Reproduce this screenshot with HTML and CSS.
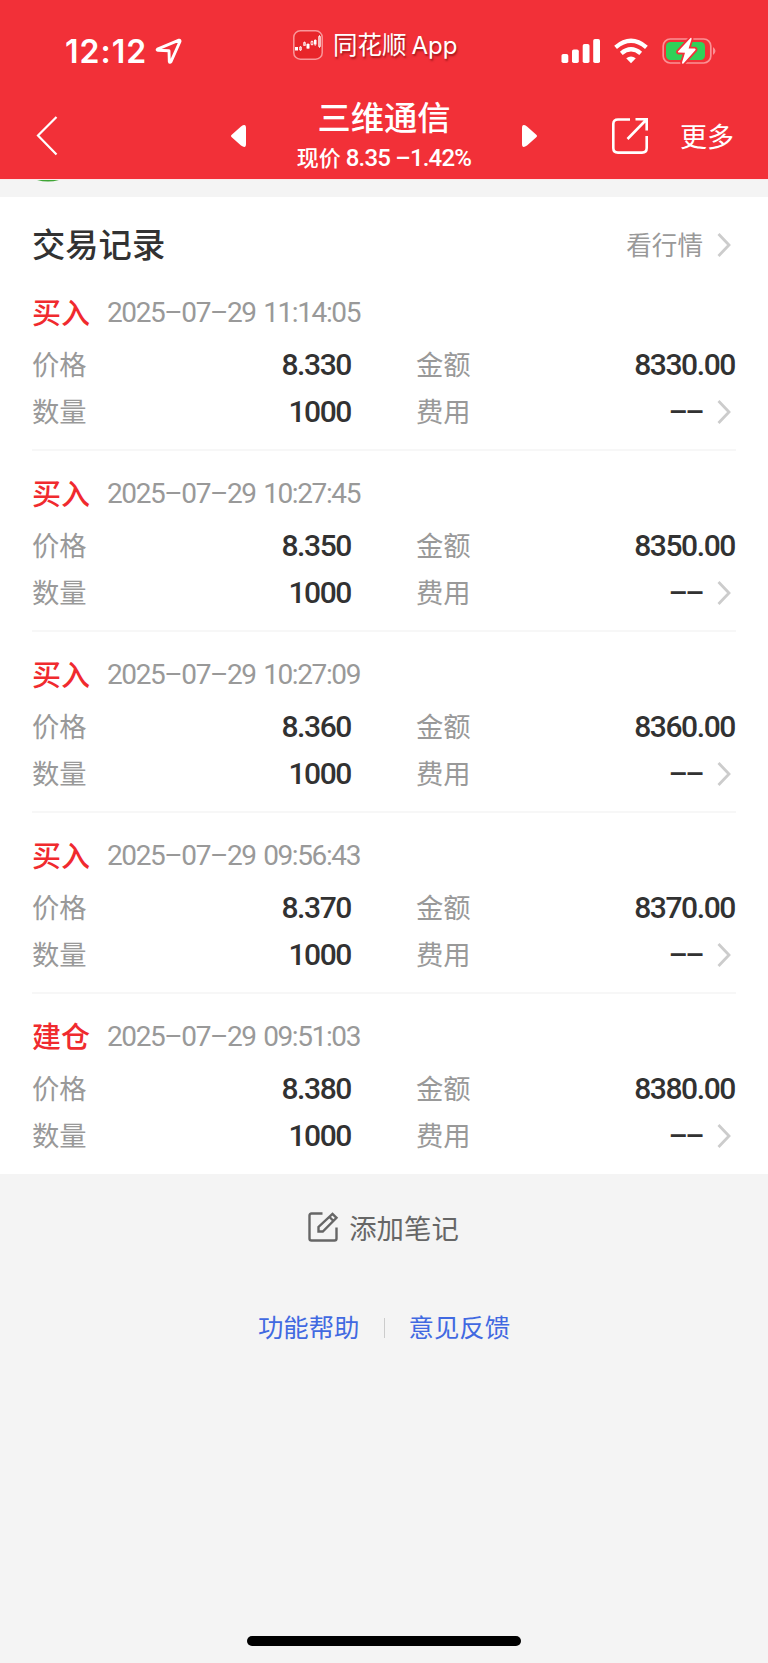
FILE: index.html
```
<!DOCTYPE html>
<html lang="zh-CN">

<head>
  <meta charset="UTF-8">
  <meta name="viewport" content="width=device-width, initial-scale=1.0">
  <title>交易记录</title>
  <link rel="stylesheet" href="styles.css">
</head>

<body>
  <header class="header">
    <div class="status">
      <span class="time">12:12</span>
      <svg class="location" width="27" height="27" viewBox="0 0 27 27">
        <path d="M24 2.2 2.5 11.2Q1.5 12 3 12.3L14 12.8 14.3 23.5Q14.8 25.2 16 23.6L25 3.5Q25.2 1.8 24 2.2Z" fill="none" stroke="#fff" stroke-width="2.9" stroke-linejoin="round"/>
      </svg>
      <svg class="app-icon" width="30" height="30" viewBox="0 0 30 30">
        <rect x=".8" y=".8" width="28.4" height="28.4" rx="6.5" fill="#e8252a" stroke="#f9979a" stroke-width="1.5"/>
        <path d="M2 17h3v3.500H2zM13.500 14h3v4.500h-3zM21 10h2.500v4.500H21z" fill="#fff"/>
        <path d="M6.500 17h2v3h-2zM10.500 12.500h2v3h-2zM18 11.500h2v3h-2zM25.500 6.500h2v10h-2zM7.500 16v5M11.500 11.500v4M19 10.500v5M26.500 5v13M15 13v6M22.200 9v7" fill="none" stroke="#fff" stroke-width=".7"/>
      </svg>
      <span class="app-name">同花顺<span class="latin">App</span></span>
      <svg class="signals" width="158" height="30" viewBox="0 0 158 30">
        <g fill="#fff">
          <rect x="1.500" y="18" width="6.800" height="9" rx="1.800"/>
          <rect x="12" y="13.500" width="6.800" height="13.500" rx="1.800"/>
          <rect x="22.700" y="8" width="6.800" height="19" rx="1.800"/>
          <rect x="33.200" y="3" width="6.800" height="24" rx="1.800"/>
          <path d="M71 27.200l-4.800-4.900q4.800-3.800 9.600 0z"/>
        </g>
        <path d="M55.600 11.300q15.400-13 30.800 0M61.300 17.300q9.700-8 19.400 0" fill="none" stroke="#fff" stroke-width="4.300"/>
        <rect x="103.200" y="3" width="47.600" height="24" rx="7" fill="none" stroke="#fa9195" stroke-width="1.700"/>
        <path d="M153 11q5 4 0 8z" fill="#fa9195"/>
        <rect x="106" y="6" width="39" height="18" rx="4.500" fill="#30d158"/>
        <path d="M130.500 2 118 15.500Q117.500 16.500 118.800 16.600L125 16.800 122 26.500Q122 28.500 123.700 27.200L135.500 14Q136 12.700 134.700 12.600L128.600 12.500 131.600 3Q131.600 1.200 130.500 2Z" fill="#fff" stroke="#f23038" stroke-width="3.600" paint-order="stroke"/>
      </svg>
    </div>
    <nav class="nav">
      <svg class="back" width="24" height="42" viewBox="0 0 24 42">
        <path d="M21.500 2 3 20.500l18.500 19" fill="none" stroke="#fff" stroke-width="2.200"/>
      </svg>
      <svg class="prev" width="18" height="24" viewBox="0 0 18 24">
        <path d="M2 10.500 11 2.500Q16 -1 16 4v16q0 5-5 1.500L2 13.500q-2-1.500 0-3z" fill="#fff"/>
      </svg>
      <div class="stock">
        <h1>三维通信</h1>
        <p>现价 <span class="quote">8.35 –1.42%</span></p>
      </div>
      <svg class="next" width="18" height="24" viewBox="0 0 18 24">
        <path d="M16 10.500 7 2.500Q2 -1 2 4v16q0 5 5 1.500L16 13.500q2-1.500 0-3z" fill="#fff"/>
      </svg>
      <svg class="share" width="38" height="38" viewBox="0 0 38 38">
        <path d="M19 2.500H7Q2.300 2.500 2.300 7v24q0 4.600 4.700 4.600h24q4.700 0 4.700-4.600V19M24.500 2.200H35.700V13.500M35.500 2.500 16.500 22" fill="none" stroke="#fff" stroke-width="2.600"/>
      </svg>
      <span class="more">更多</span>
    </nav>
  </header>

  <div class="gap-strip">
    <svg width="22" height="2" viewBox="0 0 22 2"><path d="M0 0h22q-11 3-22 0z" fill="#3fa535"/></svg>
  </div>

  <main class="card">
    <div class="card-head">
      <h2>交易记录</h2>
      <a class="market">看行情</a>
      <svg class="arrow" width="14" height="26" viewBox="0 0 14 26"><path d="M1.500 2l10.500 11L1.500 24"/></svg>
    </div>

    <section class="record">
      <div class="record-head"><b>买入</b><time>2025–07–29 11:14:05</time></div>
      <dl>
        <dt>价格</dt><dd>8.330</dd>
        <dt>金额</dt><dd>8330.00</dd>
        <dt>数量</dt><dd>1000</dd>
        <dt>费用</dt>
        <dd class="fee"><span>––</span><svg class="arrow" width="14" height="26" viewBox="0 0 14 26"><path d="M1.500 2l10.500 11L1.500 24"/></svg></dd>
      </dl>
    </section>

    <section class="record">
      <div class="record-head"><b>买入</b><time>2025–07–29 10:27:45</time></div>
      <dl>
        <dt>价格</dt><dd>8.350</dd>
        <dt>金额</dt><dd>8350.00</dd>
        <dt>数量</dt><dd>1000</dd>
        <dt>费用</dt>
        <dd class="fee"><span>––</span><svg class="arrow" width="14" height="26" viewBox="0 0 14 26"><path d="M1.500 2l10.500 11L1.500 24"/></svg></dd>
      </dl>
    </section>

    <section class="record">
      <div class="record-head"><b>买入</b><time>2025–07–29 10:27:09</time></div>
      <dl>
        <dt>价格</dt><dd>8.360</dd>
        <dt>金额</dt><dd>8360.00</dd>
        <dt>数量</dt><dd>1000</dd>
        <dt>费用</dt>
        <dd class="fee"><span>––</span><svg class="arrow" width="14" height="26" viewBox="0 0 14 26"><path d="M1.500 2l10.500 11L1.500 24"/></svg></dd>
      </dl>
    </section>

    <section class="record">
      <div class="record-head"><b>买入</b><time>2025–07–29 09:56:43</time></div>
      <dl>
        <dt>价格</dt><dd>8.370</dd>
        <dt>金额</dt><dd>8370.00</dd>
        <dt>数量</dt><dd>1000</dd>
        <dt>费用</dt>
        <dd class="fee"><span>––</span><svg class="arrow" width="14" height="26" viewBox="0 0 14 26"><path d="M1.500 2l10.500 11L1.500 24"/></svg></dd>
      </dl>
    </section>

    <section class="record">
      <div class="record-head"><b>建仓</b><time>2025–07–29 09:51:03</time></div>
      <dl>
        <dt>价格</dt><dd>8.380</dd>
        <dt>金额</dt><dd>8380.00</dd>
        <dt>数量</dt><dd>1000</dd>
        <dt>费用</dt>
        <dd class="fee"><span>––</span><svg class="arrow" width="14" height="26" viewBox="0 0 14 26"><path d="M1.500 2l10.500 11L1.500 24"/></svg></dd>
      </dl>
    </section>
  </main>

  <div class="note">
    <svg width="32" height="32" viewBox="0 0 32 32">
      <path d="M15.500 2.500H4.500q-2 0-2 2v23q0 2 2 2h23q2 0 2-2V16.500M11.500 20.500V16L25.500 2.800 29.500 6.800 15.800 20.500zM22.500 6l4 4" fill="none" stroke="#666" stroke-width="2.400"/>
    </svg>
    <span>添加笔记</span>
  </div>

  <div class="links">
    <a>功能帮助</a>
    <i></i>
    <a>意见反馈</a>
  </div>

  <div class="home-bar"></div>
</body>

</html>
```
FILE: styles.css
```
*{
  box-sizing: border-box;
  margin:0;
  padding:0;
}
body{
  display: flex;
  flex-direction: column;
  width:768px;
  height:1663px;
  overflow: hidden;
  background-color:#f4f4f4;
  color:#323232;
  font-family: "Noto Sans CJK SC", sans-serif;
}
svg{
  display: block;
  flex:none;
}
.header{
  height:179px;
  background-color:#f23038;
  color:#fff;
}
.status{
  display: flex;
  align-items: flex-start;
  height:90px;
  white-space: nowrap;
}
.time{
  width:90px;
  margin:32px 0 0 65px;
  font:600 32px/40px Inter, sans-serif;
  letter-spacing:1px;
}
.location{
  margin-top:38px;
}
.app-icon{
  margin:30px 0 0 111px;
}
.app-name{
  width:130px;
  margin:26px 0 0 10px;
  font-size:24.5px;
  line-height:36px;
  text-shadow:1px 2px 2px rgba(80,0,0,.5);
}
.latin{
  margin-left:5px;
  font-family: Inter, sans-serif;
  font-size:24px;
}
.signals{
  margin:36px 0 0 97px;
}
.nav{
  display: flex;
  align-items: flex-start;
  height:89px;
}
.back{
  margin:25px 0 0 35px;
}
.prev{
  margin:34px 0 0 171px;
}
.stock{
  width:272px;
  text-align: center;
}
.stock h1{
  margin-top:2px;
  font-size:33.3px;
  font-weight:500;
  line-height:48px;
}
.stock p{
  margin-top:-1px;
  font-size:22px;
  font-weight:500;
  line-height:34px;
}
.quote{
  font-family: Roboto, sans-serif;
  font-size:24px;
  letter-spacing:-.8px;
}
.next{
  margin-top:34px;
}
.share{
  margin:27px 0 0 73px;
}
.more{
  margin:26px 0 0 31px;
  font-size:27px;
  line-height:40px;
}
.gap-strip{
  height:18px;
  padding-left:37px;
  border-top:1px solid #fbe9ea;
}
.card{
  height:977px;
  padding:0 32px;
  background-color:#fff;
}
.card-head{
  display: flex;
  align-items: center;
  height:71px;
  padding:24px 5px 0 0;
}
.card-head h2{
  flex:1;
  margin-top:-4px;
  font-size:33.3px;
  font-weight:500;
  line-height:47px;
}
.market{
  margin:-3px 14px 0 0;
  color:#999;
  font-size:25.6px;
}
.arrow path{
  fill:none;
  stroke:#ccc;
  stroke-width:2.8;
}
.record{
  height:181.1px;
  padding-top:20px;
}
/* thin rule between two records */
.record + .record{
  background:linear-gradient(#f7f7f7,#f7f7f7) 0 0/100% 2px no-repeat;
}
.record-head{
  display: flex;
  gap:17px;
  height:48px;
  margin-bottom:6px;
}
.record-head b{
  color:#f02a2e;
  font-size:29px;
  font-weight:500;
  line-height:46px;
}
.record-head time{
  color:#999;
  font-family: Roboto, sans-serif;
  font-size:28px;
  letter-spacing:-1.4px;
  line-height:50px;
  word-spacing:2px;
}
.record dl{
  display: grid;
  grid-template-columns:100px 220px 164px 220px;
  grid-auto-rows:46.5px;
}
.record dt{
  color:#999;
  font-size:27.3px;
  line-height:42.5px;
}
.record dt:nth-of-type(even){
  padding-left:64px;
}
.record dd{
  padding-right:1px;
  font-family: Roboto, sans-serif;
  font-size:30px;
  font-weight:500;
  letter-spacing:-1.4px;
  line-height:46.5px;
  text-align: right;
}
.record .fee{
  display: flex;
  align-items: center;
  justify-content: flex-end;
  gap:15px;
  padding-right:5px;
}
.fee span{
  letter-spacing:-2.5px;
}
.note{
  display: flex;
  align-items: center;
  justify-content: center;
  gap:10px;
  height:40px;
  margin:33px 2px 0 0;
  color:#666;
  font-size:27.4px;
  line-height:40px;
}
.links{
  display: flex;
  align-items: center;
  justify-content: center;
  gap:24px;
  margin-top:59px;
  color:#4169e1;
  font-size:25.4px;
  line-height:40px;
}
.links i{
  width:1px;
  height:20px;
  margin-top:3px;
  background-color:#ccc;
}
.home-bar{
  width:274px;
  height:10px;
  margin:auto auto 17px;
  border-radius:5px;
  background-color:#000;
}
```
